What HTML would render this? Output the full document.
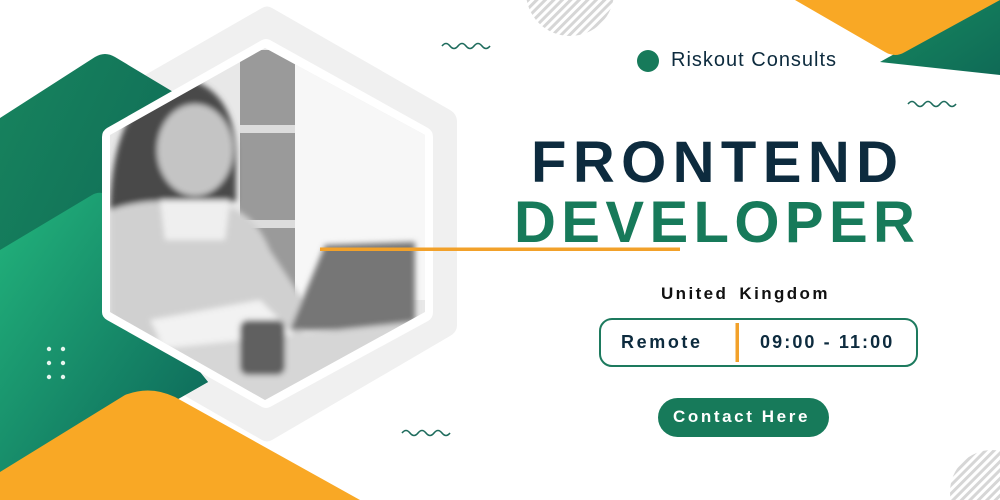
<!DOCTYPE html>
<html><head><meta charset="utf-8"><style>
html,body{margin:0;padding:0;overflow:hidden}
body{width:1000px;height:500px;position:relative;overflow:hidden;background:#fff;font-family:"Liberation Sans",sans-serif}
.t{position:absolute;white-space:nowrap}
</style></head><body>
<svg width="1000" height="500" style="position:absolute;left:0;top:0;display:block">
<defs>
<linearGradient id="dg" x1="0" y1="0" x2="1" y2="1"><stop offset="0" stop-color="#17845e"/><stop offset="1" stop-color="#0c5e52"/></linearGradient>
<linearGradient id="lg" x1="0" y1="0" x2="1" y2="1"><stop offset="0" stop-color="#22b47c"/><stop offset="1" stop-color="#0b5f55"/></linearGradient>
<linearGradient id="tg" x1="0" y1="0" x2="1" y2="1"><stop offset="0" stop-color="#178a60"/><stop offset="1" stop-color="#0f6a56"/></linearGradient>
<pattern id="st" width="6" height="6" patternUnits="userSpaceOnUse" patternTransform="rotate(45)"><rect width="3" height="6" fill="#d6d6d6"/></pattern>
<clipPath id="ph"><path d="M265,48 L425,135 L425,312 L265,400 L110,312 L110,135 Z"/></clipPath>
<filter id="bl"><feGaussianBlur stdDeviation="3"/></filter>
</defs>
<circle cx="570" cy="-8" r="44" fill="url(#st)"/>
<circle cx="992" cy="492" r="42" fill="url(#st)"/>
<path d="M262,8 Q267,5 272,8 L450,110 Q457,114 457,122 L457,325 Q457,332 450,336 L272,440 Q267,443 262,440 L70,330 L70,118 Z" fill="#f0f0f0"/>
<path d="M0,118 L95,57 Q105,51 115,57 L200,108 L200,372 L208,382 L0,500Z" fill="url(#dg)"/>
<path d="M0,250 L92,195 Q100,190 110,196 L200,250 L200,372 L208,382 L0,500Z" fill="url(#lg)"/>
<path d="M262,40 Q266,38 270,40 L428,128 Q433,131 433,137 L433,312 Q433,318 428,321 L270,407 Q266,409 262,407 L107,320 Q102,317 102,312 L102,137 Q102,131 107,128 Z" fill="#fff"/>
<g clip-path="url(#ph)">
<rect x="100" y="40" width="340" height="370" fill="#e8e8e8"/>
<rect x="240" y="50" width="55" height="250" fill="#9a9a9a"/>
<rect x="240" y="125" width="55" height="8" fill="#dcdcdc"/>
<rect x="240" y="220" width="55" height="8" fill="#dcdcdc"/>
<rect x="295" y="60" width="140" height="240" fill="#f7f7f7"/>
<g filter="url(#bl)">
<path d="M110,210 Q112,95 180,78 Q232,85 236,150 L236,200 L110,270Z" fill="#4a4a4a"/>
<ellipse cx="195" cy="150" rx="38" ry="46" fill="#c4c4c4"/>
<path d="M110,210 Q150,195 200,205 Q250,200 270,250 L310,310 L300,340 L110,340Z" fill="#d0d0d0"/>
<path d="M160,200 L230,200 L225,240 L165,240Z" fill="#efefef"/>
<path d="M150,320 L260,300 L300,340 L170,360Z" fill="#f2f2f2"/>
<path d="M290,330 L325,245 L415,242 L415,330Z" fill="#767676"/>
<path d="M150,350 L430,320 L430,410 L150,410Z" fill="#d6d6d6"/>
<rect x="240" y="320" width="45" height="55" rx="8" fill="#606060"/>
</g>
</g>
<path d="M125,395 Q150,385 175,397 L360,500 L0,500 L0,472Z" fill="#f9a825"/>
<path d="M880,62 L1000,-5 L1000,75Z" fill="url(#tg)"/>
<path d="M795,0 L1000,0 L905,52 Q895,58 885,52Z" fill="#f9a825"/>
<rect x="320" y="247.5" width="360" height="3.5" fill="#f2a12a"/>
<g fill="none" stroke="#1d6b5c" stroke-width="1.6">
<path d="M442,46 q4,-5 8,0 t8,0 t8,0 t8,0 t8,0 t8,0"/>
<path d="M908,104 q4,-5 8,0 t8,0 t8,0 t8,0 t8,0 t8,0"/>
<path d="M402,433 q4,-5 8,0 t8,0 t8,0 t8,0 t8,0 t8,0"/>
</g>
<g fill="#e6f5ee"><circle cx="49" cy="349" r="2.2"/><circle cx="63" cy="349" r="2.2"/><circle cx="49" cy="363" r="2.2"/><circle cx="63" cy="363" r="2.2"/><circle cx="49" cy="377" r="2.2"/><circle cx="63" cy="377" r="2.2"/></g>
<circle cx="648" cy="61" r="11" fill="#177a5a"/>
<rect x="600" y="319" width="317" height="47" rx="12" fill="#fff" stroke="#1d7a5e" stroke-width="2"/>
<rect x="735.5" y="323" width="3.5" height="39" fill="#f2a12a"/>
<rect x="658" y="398" width="171" height="39" rx="19.5" fill="#177a5a"/>
</svg>
<div class="t" style="left:671px;top:49px;font-size:20px;color:#0d2b3e;letter-spacing:1px">Riskout Consults</div>
<div class="t" style="left:531px;top:132px;font-size:58px;font-weight:bold;color:#0d2b3e;letter-spacing:6.4px;line-height:62px">FRONTEND</div>
<div class="t" style="left:514px;top:192px;font-size:58px;font-weight:bold;color:#177a5a;letter-spacing:5.4px;line-height:62px">DEVELOPER</div>
<div class="t" style="left:661px;top:284px;font-size:17px;font-weight:bold;color:#111;letter-spacing:2.4px;word-spacing:4px">United Kingdom</div>
<div class="t" style="left:621px;top:332px;font-size:18px;font-weight:bold;color:#0d2b3e;letter-spacing:2.6px">Remote</div>
<div class="t" style="left:760px;top:332px;font-size:18px;font-weight:bold;color:#0d2b3e;letter-spacing:2.1px">09:00 - 11:00</div>
<div class="t" style="left:673px;top:407px;font-size:17px;font-weight:bold;color:#fff;letter-spacing:2.6px">Contact Here</div>
</body></html>
